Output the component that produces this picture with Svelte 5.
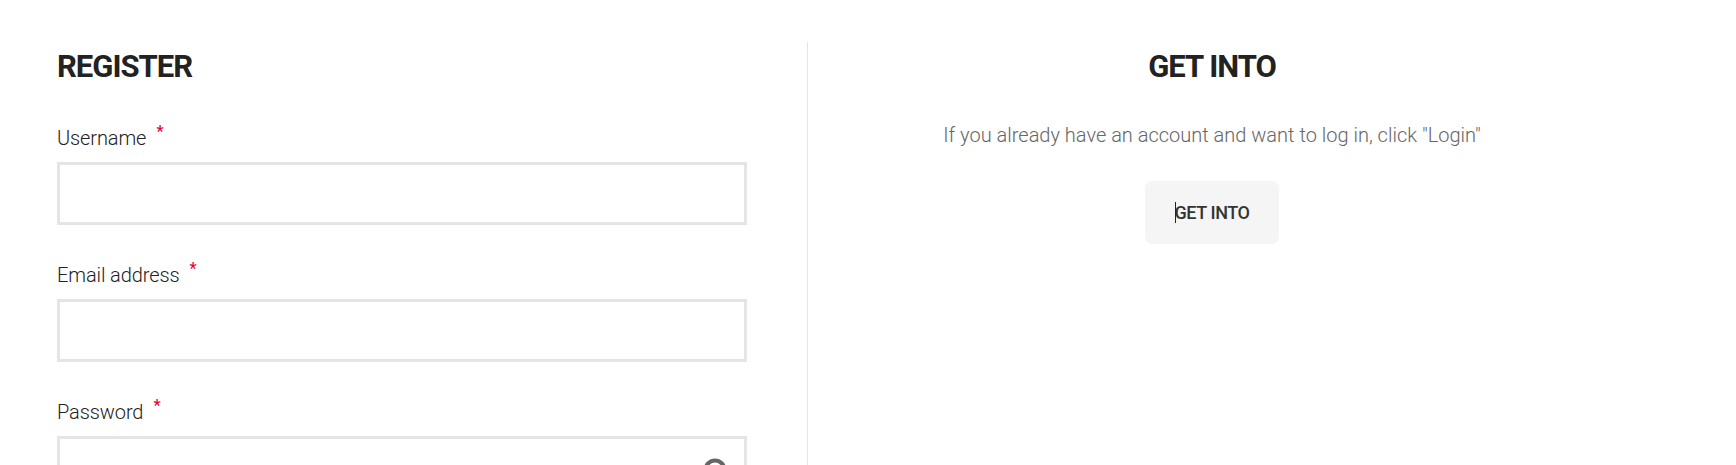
<script>
  const fields = [
    { id: 'username', label: 'Username', type: 'text' },
    { id: 'email', label: 'Email address', type: 'email' },
    { id: 'password', label: 'Password', type: 'password' }
  ];
</script>

<main class="page">
  <section class="col register">
    <h2>REGISTER</h2>
    {#each fields as f}
      <div class="field">
        <label for={f.id}>{f.label}<span class="req">*</span></label>
        <div class="wrap">
          <input id={f.id} type={f.type} />
          {#if f.type === 'password'}
            <svg class="eye" viewBox="0 0 24 24" width="24" height="24" aria-hidden="true">
              <circle cx="12" cy="12" r="9.5" fill="none" stroke="#666" stroke-width="4" />
              <circle cx="12" cy="12" r="4" fill="#666" />
            </svg>
          {/if}
        </div>
      </div>
    {/each}
  </section>
  <section class="col login">
    <h2>GET INTO</h2>
    <p>If you already have an account and want to log in, click "Login"</p>
    <button type="button"><span class="caret"></span>GET INTO</button>
  </section>
</main>

<style>
  :global(body) {
    margin: 0;
    background: #fff;
    overflow: hidden;
  }
  .page {
    display: grid;
    grid-template-columns: 808px 808px;
    height: 465px;
    padding: 42px 0 0 0;
    box-sizing: border-box;
    font-family: Roboto, "Liberation Sans", sans-serif;
    overflow: hidden;
  }
  .register {
    padding: 0 60px 0 57px;
    border-right: 1px solid #e5e5e5;
    box-sizing: border-box;
  }
  .register h2 {
    margin-bottom: 38px;
  }
  .login {
    display: flex;
    flex-direction: column;
    align-items: center;
  }
  h2 {
    margin: 5px 0 0;
    font-size: 31px;
    line-height: 40px;
    font-weight: 700;
    color: #222;
    letter-spacing: -1px;
  }
  .field {
    margin-bottom: 37px;
  }
  label {
    display: block;
    height: 26px;
    font-size: 20px;
    line-height: 26px;
    letter-spacing: -0.1px;
    font-weight: 300;
    color: #222;
    margin-bottom: 11px;
  }
  .req {
    color: #e8003d;
    margin-left: 10px;
    font-size: 16px;
    font-weight: 500;
    position: relative;
    top: -8px;
  }
  .wrap {
    position: relative;
  }
  input {
    display: block;
    width: 100%;
    height: 63px;
    box-sizing: border-box;
    border: 3px solid #e5e5e5;
    background: #fff;
    outline: none;
  }
  .eye {
    position: absolute;
    right: 20px;
    top: 22px;
  }
  p {
    margin: 34px 0 0;
    font-size: 20px;
    line-height: 28px;
    letter-spacing: 0;
    font-weight: 300;
    color: #666;
  }
  button {
    margin-top: 32px;
    width: 134px;
    height: 63px;
    padding: 0;
    border: 0;
    border-radius: 7px;
    background: #f5f5f5;
    font-family: inherit;
    font-size: 18px;
    font-weight: 500;
    letter-spacing: -0.4px;
    color: #333;
    position: relative;
  }
  .caret {
    position: absolute;
    left: 30px;
    top: 21px;
    width: 1px;
    height: 21px;
    background: #222;
  }
</style>
